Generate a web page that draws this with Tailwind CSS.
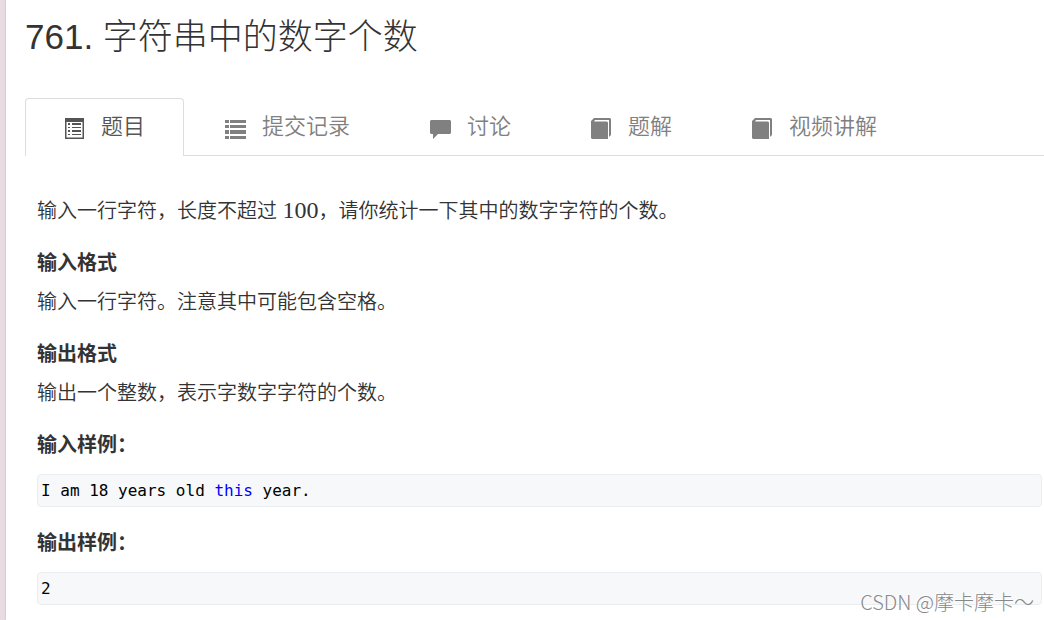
<!DOCTYPE html>
<html lang="zh-CN">
<head>
  <meta charset="UTF-8">
  <meta name="viewport" content="width=device-width, initial-scale=1.0">
  <title>761. 字符串中的数字个数</title>
  <!-- Tailwind CSS CDN -->
  <script src="https://cdn.jsdelivr.net/npm/@tailwindcss/browser@4"></script>
</head>
<body class="min-h-screen bg-[#e8dbe3] pl-[6px] font-['Liberation_Sans','Noto_Sans_CJK_SC',sans-serif] text-[#333]">
<main class="min-h-screen bg-white pl-[19px] pt-[13px] pb-[14px] shadow-[0_0_2px_rgba(0,0,0,0.2)]">
  <h1 class="text-[35px] leading-[48px] font-light">761. 字符串中的数字个数</h1>

  <!-- Tabs -->
  <nav class="mt-[37px] flex border-b border-[#ddd] text-[22px] leading-[28px] text-[#808080]">
    <a href="#problem" aria-current="page"
       class="-mb-px mr-[2px] flex items-center gap-4 rounded-t border border-b-0 border-[#ddd] bg-white px-[38px] pt-[14px] pb-[15px] font-[350] text-[#555]">
      <svg class="mt-[3px] h-[21px] w-[21px]" viewBox="0 0 21 21" fill="currentColor" aria-hidden="true">
        <path fill-rule="evenodd" d="M1 0h19v21H1zM2.500 4v15.500h16V4z"/>
        <path d="M4 5h2v2H4zM4 9h2v1H4zM4 12h2v2H4zM4 16h2v1H4zM8 5h9v2H8zM8 9h9v1H8zM8 12h9v2H8zM8 16h9v1H8z"/>
      </svg>
      <span>题目</span>
    </a>
    <a href="#submissions" class="mr-[2px] flex items-center gap-4 px-[39px] pt-[15px] pb-[14px] font-[350]">
      <svg class="mt-[3px] h-[21px] w-[21px]" viewBox="0 0 21 21" fill="currentColor" aria-hidden="true">
        <path d="M0 2h4v3H0zM0 7h4v3H0zM0 12h4v4H0zM0 18h4v3H0zM5 2h16v3H5zM5 7h16v3H5zM5 12h16v4H5zM5 18h16v3H5z"/>
      </svg>
      <span>提交记录</span>
    </a>
    <a href="#discussion" class="mr-[2px] flex items-center gap-4 px-[39px] pt-[15px] pb-[14px] font-[350]">
      <svg class="mt-[3px] h-[21px] w-[21px]" viewBox="0 0 21 21" fill="currentColor" aria-hidden="true">
        <path d="M1 2h19l1 1v12l-1 1H8l-5 5v-5H1l-1-1V3z"/>
      </svg>
      <span>讨论</span>
    </a>
    <a href="#solution" class="mr-[2px] flex items-center gap-4 px-[39px] pt-[15px] pb-[14px] font-[350]">
      <svg class="mt-[3px] h-[21px] w-[21px]" viewBox="0 0 21 21" fill="currentColor" aria-hidden="true">
        <path d="M3 0h16l1 1v16l-2 2V2H4L3 3.500h13l1 1V21H1l-1-1V3z"/>
      </svg>
      <span>题解</span>
    </a>
    <a href="#video" class="mr-[2px] flex items-center gap-4 px-[39px] pt-[15px] pb-[14px] font-[350]">
      <svg class="mt-[3px] h-[21px] w-[21px]" viewBox="0 0 21 21" fill="currentColor" aria-hidden="true">
        <path d="M3 0h16l1 1v16l-2 2V2H4L3 3.500h13l1 1V21H1l-1-1V3z"/>
      </svg>
      <span>视频讲解</span>
    </a>
  </nav>

  <!-- Problem statement -->
  <article class="mt-10 pl-3 pr-[2px] text-[20px] leading-[28px]">
    <p class="font-[350]">输入一行字符，长度不超过 <span class="font-['Liberation_Serif',serif] text-[24px] font-normal">100</span>，请你统计一下其中的数字字符的个数。</p>
    <h2 class="mt-6 font-bold">输入格式</h2>
    <p class="mt-[11px] font-[350]">输入一行字符。注意其中可能包含空格。</p>
    <h2 class="mt-6 font-bold">输出格式</h2>
    <p class="mt-[11px] font-[350]">输出一个整数，表示字数字字符的个数。</p>
    <h2 class="mt-6 font-bold">输入样例：</h2>
    <pre class="mt-[15px] mb-[22px] rounded-sm border border-[#eaeef1] bg-[#f6f8fa] px-[3px] py-1 font-['DejaVu_Sans_Mono',monospace] text-[16px] leading-[23px] text-black">I am 18 years old <span class="text-[#0000ff]">this</span> year.</pre>
    <h2 class="font-bold">输出样例：</h2>
    <pre class="mt-[15px] rounded-sm border border-[#eaeef1] bg-[#f6f8fa] px-[3px] py-1 font-['DejaVu_Sans_Mono',monospace] text-[16px] leading-[23px] text-black">2</pre>
  </article>
</main>

<!-- Watermark -->
<div class="pointer-events-none absolute right-[10px] bottom-1 font-['Noto_Sans_CJK_SC',sans-serif] text-[20px] leading-[28px] font-light text-[#888] [text-shadow:-1px_-1px_0_#fff]">CSDN @摩卡摩卡～</div>
</body>
</html>
